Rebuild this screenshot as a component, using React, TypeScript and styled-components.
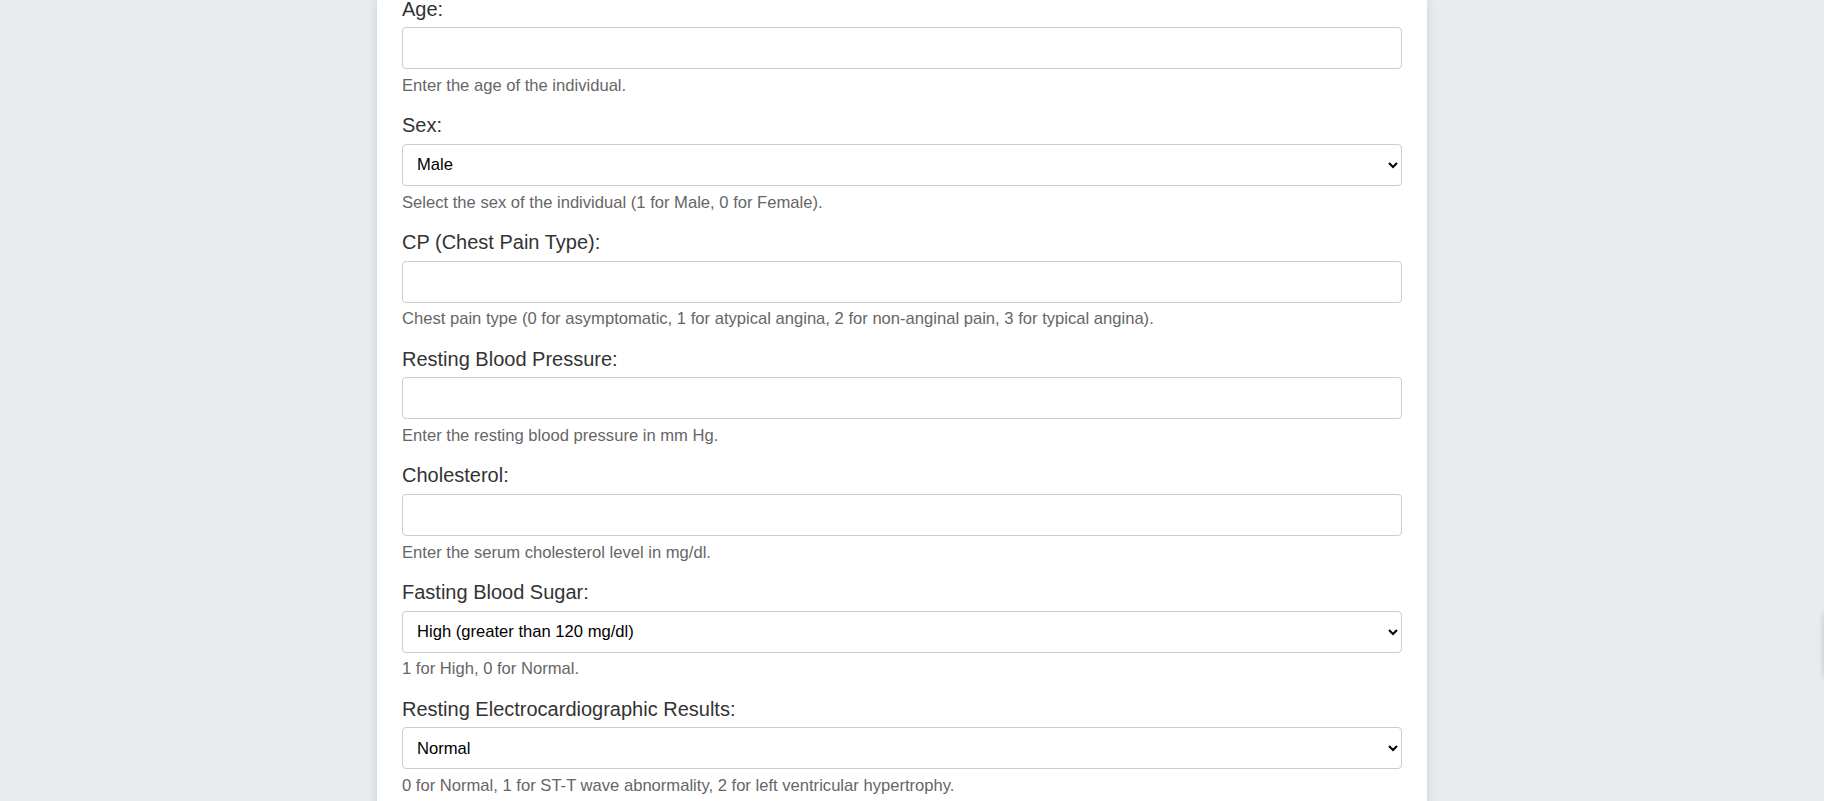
import React from "react";
import styled, { createGlobalStyle } from "styled-components";

const GlobalStyle = createGlobalStyle`
  html, body {
    margin: 0;
    padding: 0;
    background: #e9ecef;
    font-family: "Liberation Sans", Arial, sans-serif;
    overflow: hidden;
  }
`;

const Page = styled.div`
  display: flex;
  justify-content: center;
  padding-right: 20px;
  min-height: 801px;
`;

const Card = styled.form`
  width: 1050px;
  box-sizing: border-box;
  background: #ffffff;
  padding: 0 25px 40px;
  margin-top: -2.4px;
  box-shadow: 0 0 10px rgba(0, 0, 0, 0.12);
`;

const Group = styled.div`
  display: flex;
  flex-direction: column;
  margin-bottom: 19.3px;
`;

const Label = styled.label`
  font-size: 20px;
  line-height: 23px;
  color: #333333;
  margin-bottom: 6.7px;
`;

const fieldBase = `
  box-sizing: border-box;
  width: 100%;
  height: 42px;
  border: 1px solid #cccccc;
  border-radius: 4px;
  background: #ffffff;
  font-family: "Liberation Sans", Arial, sans-serif;
  font-size: 16.6px;
  color: #000000;
  outline: none;
`;

const TextInput = styled.input`
  ${fieldBase}
  padding: 0 14px;
`;

const Select = styled.select`
  ${fieldBase}
  padding: 0 10px;
`;

const Help = styled.small`
  display: block;
  margin-top: 6.6px;
  font-size: 16.6px;
  line-height: 19.1px;
  color: #666666;
`;

const EdgeTab = styled.div`
  position: fixed;
  top: 612px;
  right: -40px;
  width: 40px;
  height: 66px;
  background: #e9ecef;
  border-radius: 6px;
  box-shadow: 0 0 6px rgba(0, 0, 0, 0.18);
`;

type Field =
  | { kind: "input"; id: string; label: string; help: string }
  | { kind: "select"; id: string; label: string; help: string; options: string[] };

const fields: Field[] = [
  { kind: "input", id: "age", label: "Age:", help: "Enter the age of the individual." },
  {
    kind: "select",
    id: "sex",
    label: "Sex:",
    help: "Select the sex of the individual (1 for Male, 0 for Female).",
    options: ["Male", "Female"],
  },
  {
    kind: "input",
    id: "cp",
    label: "CP (Chest Pain Type):",
    help: "Chest pain type (0 for asymptomatic, 1 for atypical angina, 2 for non-anginal pain, 3 for typical angina).",
  },
  {
    kind: "input",
    id: "trestbps",
    label: "Resting Blood Pressure:",
    help: "Enter the resting blood pressure in mm Hg.",
  },
  {
    kind: "input",
    id: "chol",
    label: "Cholesterol:",
    help: "Enter the serum cholesterol level in mg/dl.",
  },
  {
    kind: "select",
    id: "fbs",
    label: "Fasting Blood Sugar:",
    help: "1 for High, 0 for Normal.",
    options: ["High (greater than 120 mg/dl)", "Normal"],
  },
  {
    kind: "select",
    id: "restecg",
    label: "Resting Electrocardiographic Results:",
    help: "0 for Normal, 1 for ST-T wave abnormality, 2 for left ventricular hypertrophy.",
    options: ["Normal", "ST-T wave abnormality", "Left ventricular hypertrophy"],
  },
];

export default function App() {
  return (
    <>
      <GlobalStyle />
      <Page>
        <Card onSubmit={(e) => e.preventDefault()}>
          {fields.map((f) => (
            <Group key={f.id}>
              <Label htmlFor={f.id}>{f.label}</Label>
              {f.kind === "input" ? (
                <TextInput id={f.id} type="number" />
              ) : (
                <Select id={f.id} defaultValue={f.options[0]}>
                  {f.options.map((o) => (
                    <option key={o} value={o}>
                      {o}
                    </option>
                  ))}
                </Select>
              )}
              <Help>{f.help}</Help>
            </Group>
          ))}
        </Card>
      </Page>
      <EdgeTab />
    </>
  );
}
